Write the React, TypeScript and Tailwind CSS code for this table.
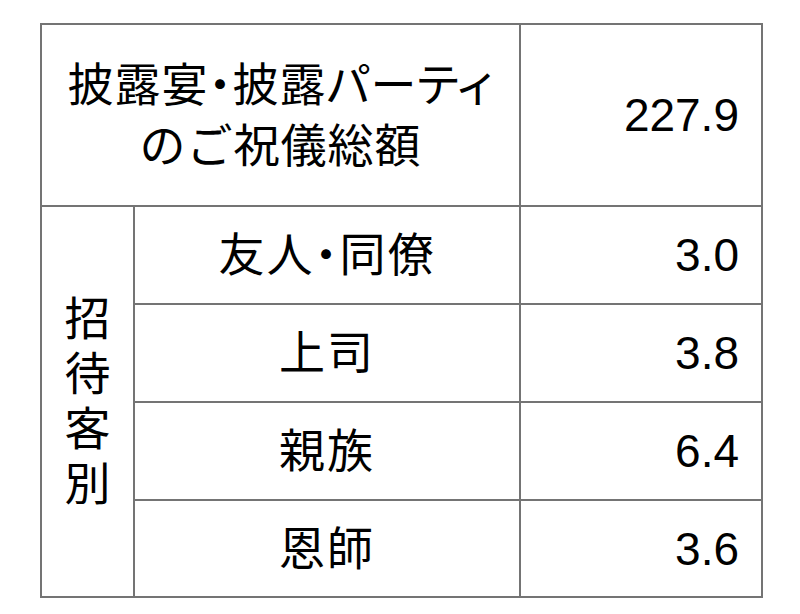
import React from "react";

export default function App() {
  const rows = [
    { label: "友人・同僚", value: "3.0" },
    { label: "上司", value: "3.8" },
    { label: "親族", value: "6.4" },
    { label: "恩師", value: "3.6" },
  ];
  return (
    <div className="w-[800px] h-[614px] bg-white overflow-hidden pt-[23px] pl-[40px] font-['Liberation_Sans','Noto_Sans_CJK_JP',sans-serif] text-black">
      <div className="grid grid-cols-[91px_384px_240px] grid-rows-[180px_96px_96px_96px_95px] gap-[2px] p-[2px] bg-[#747474] w-fit">
        <div className="col-span-2 bg-white flex flex-col items-center justify-center pt-[2px] text-[46px] leading-[61px]">
          <span className="[font-feature-settings:'palt'] tracking-[1px]">披露宴・披露パーティ</span>
          <span className="tracking-[1px]">のご祝儀総額</span>
        </div>
        <div className="bg-white flex items-center justify-end pr-[22px] text-[46px] leading-none">
          227.9
        </div>
        <div className="row-span-4 bg-white flex flex-col items-center justify-center text-[46px] leading-[55px]">
          <span>招</span>
          <span>待</span>
          <span>客</span>
          <span>別</span>
        </div>
        {rows.map((r) => (
          <React.Fragment key={r.label}>
            <div className="bg-white flex items-center justify-center text-[46px] leading-none tracking-[2px] [font-feature-settings:'palt']">
              {r.label}
            </div>
            <div className="bg-white flex items-center justify-end pr-[22px] text-[46px] leading-none">
              {r.value}
            </div>
          </React.Fragment>
        ))}
      </div>
    </div>
  );
}
